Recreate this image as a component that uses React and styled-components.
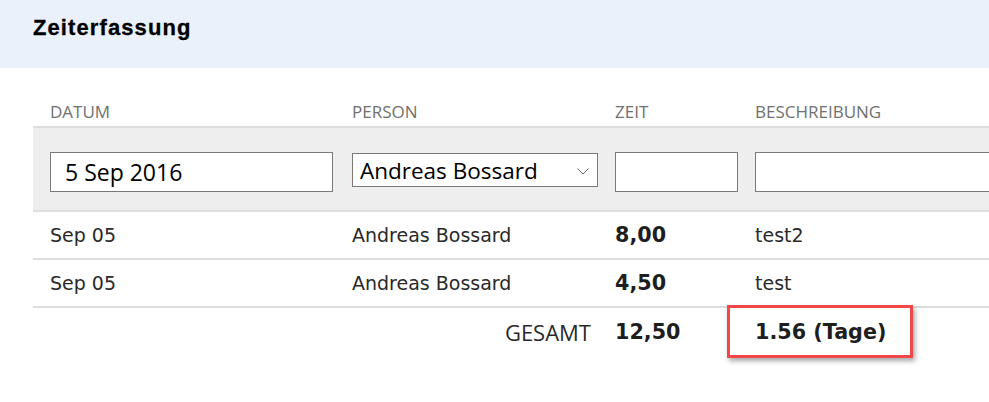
import styled, { createGlobalStyle } from 'styled-components'

const GlobalStyle = createGlobalStyle`
  html, body {
    margin: 0;
    padding: 0;
    background: #ffffff;
    overflow: hidden;
  }
  body {
    font-family: 'DejaVu Sans', Verdana, sans-serif;
    color: #333333;
  }
`

const COLUMNS = '302px 263px 140px 1fr'

const Page = styled.div`
  width: 989px;
  height: 402px;
  overflow: hidden;
`

const Header = styled.header`
  height: 68px;
  box-sizing: border-box;
  padding: 16px 33px 0;
  background: #eaf1fb;
`

const Title = styled.h1`
  margin: 0;
  font-family: 'Liberation Sans', Arial, sans-serif;
  font-weight: 700;
  font-size: 22px;
  line-height: 24px;
  letter-spacing: 1.1px;
  color: #000000;
  -webkit-text-stroke: 0.3px #000000;
`

const Table = styled.div`
  width: 1120px;
  margin: 22px 0 0 33px;
`

const Row = styled.div`
  display: grid;
  grid-template-columns: ${COLUMNS};
  align-items: ${(p) => p.$align ?? 'center'};
  height: ${(p) => p.$height}px;
  background: ${(p) => p.$bg ?? 'transparent'};
  border-bottom: ${(p) => (p.$noBorder ? 'none' : '2px solid #dddddd')};
`

const Cell = styled.div`
  position: relative;
  padding-left: 17px;
  display: flex;
  align-items: center;
  height: 100%;
`

const HeadLabel = styled.div`
  padding: 0 0 3px 17px;
  font-family: 'Open Sans', sans-serif;
  font-size: 17px;
  line-height: 22px;
  color: #707070;
  text-transform: uppercase;
`

const FilterCell = styled.div`
  position: relative;
  padding: 24px 0 0 17px;
`

const TextInput = styled.input`
  display: block;
  box-sizing: border-box;
  width: ${(p) => p.$width}px;
  height: 40px;
  margin: 0;
  padding: 0 14px;
  border: 1px solid #7a7a7a;
  border-radius: 0;
  background: #ffffff;
  font-family: 'Open Sans', sans-serif;
  font-size: 23px;
  color: #000000;
  outline: none;
`

const SelectWrap = styled.div`
  position: relative;
  width: 246px;
  height: 34px;
  margin-top: 1px;
`

const Select = styled.select`
  display: block;
  box-sizing: border-box;
  width: 100%;
  height: 100%;
  margin: 0;
  padding: 0 30px 0 7px;
  border: 1px solid #7a7a7a;
  border-radius: 0;
  background: #ffffff;
  appearance: none;
  font-family: 'Open Sans', sans-serif;
  font-size: 22.5px;
  color: #000000;
  outline: none;
`

const Chevron = styled.svg`
  position: absolute;
  left: 225px;
  top: 15px;
  pointer-events: none;
`

const Text = styled.span`
  font-size: 19px;
  color: #2a2a2a;
  white-space: nowrap;
`

const Strong = styled.span`
  font-weight: 700;
  font-size: 20.7px;
  color: #1e1e1e;
  white-space: nowrap;
`

const TotalLabel = styled.div`
  grid-column: 1 / 3;
  justify-self: end;
  padding-right: 7px;
  font-family: 'Open Sans', sans-serif;
  font-size: 22px;
  color: #2a2a2a;
`

/* red annotation frame drawn over the total in days */
const Highlight = styled.div`
  position: absolute;
  left: -11px;
  top: -3px;
  width: 186px;
  height: 53px;
  box-sizing: border-box;
  border: 3px solid #f04848;
  box-shadow: 2px 3px 5px rgba(0, 0, 0, 0.35);
  pointer-events: none;
`

const ENTRIES = [
  { date: 'Sep 05', person: 'Andreas Bossard', hours: '8,00', text: 'test2' },
  { date: 'Sep 05', person: 'Andreas Bossard', hours: '4,50', text: 'test' },
]

export default function App() {
  return (
    <Page>
      <GlobalStyle />
      <Header>
        <Title>Zeiterfassung</Title>
      </Header>
      <Table>
        <Row $height={36} $align="end">
          <HeadLabel>Datum</HeadLabel>
          <HeadLabel>Person</HeadLabel>
          <HeadLabel>Zeit</HeadLabel>
          <HeadLabel>Beschreibung</HeadLabel>
        </Row>
        <Row $height={82} $align="start" $bg="#eeeeee">
          <FilterCell>
            <TextInput $width={283} defaultValue="5 Sep 2016" />
          </FilterCell>
          <FilterCell>
            <SelectWrap>
              <Select defaultValue="ab">
                <option value="ab">Andreas Bossard</option>
              </Select>
              <Chevron width="12" height="7" viewBox="0 0 12 7">
                <polyline points="0.5,0.5 6,6 11.5,0.5" fill="none" stroke="#666" strokeWidth="1" />
              </Chevron>
            </SelectWrap>
          </FilterCell>
          <FilterCell>
            <TextInput $width={123} />
          </FilterCell>
          <FilterCell>
            <TextInput $width={300} />
          </FilterCell>
        </Row>
        {ENTRIES.map((e, i) => (
          <Row key={i} $height={46}>
            <Cell><Text>{e.date}</Text></Cell>
            <Cell><Text>{e.person}</Text></Cell>
            <Cell><Strong>{e.hours}</Strong></Cell>
            <Cell><Text>{e.text}</Text></Cell>
          </Row>
        ))}
        <Row $height={48} $noBorder>
          <TotalLabel>GESAMT</TotalLabel>
          <Cell><Strong>12,50</Strong></Cell>
          <Cell>
            <Strong>1.56 (Tage)</Strong>
            <Highlight />
          </Cell>
        </Row>
      </Table>
    </Page>
  )
}
